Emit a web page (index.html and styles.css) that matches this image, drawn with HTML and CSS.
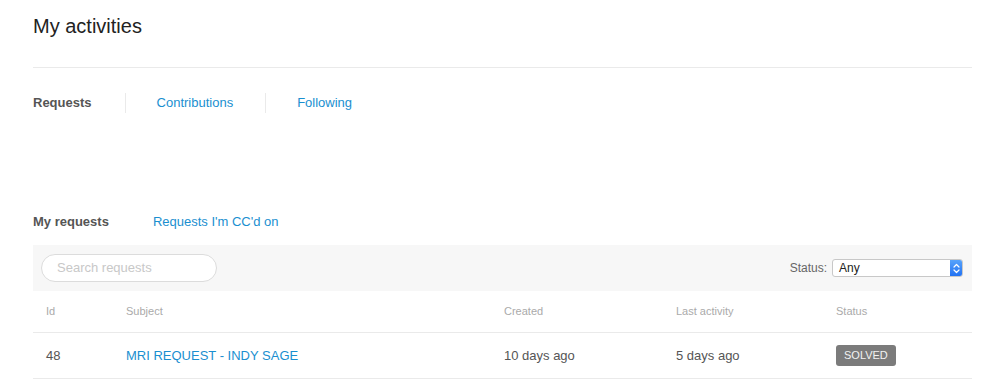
FILE: index.html
```html
<!DOCTYPE html>
<html lang="en">
<head>
<meta charset="utf-8">
<title>My activities</title>
<link rel="stylesheet" href="styles.css">
</head>
<body>
<div class="page">
  <header class="page-header">
    <h1>My activities</h1>
  </header>
  <nav class="tabs">
    <span class="tab current">Requests</span>
    <a class="tab" href="#">Contributions</a>
    <a class="tab" href="#">Following</a>
  </nav>
  <nav class="subtabs">
    <span class="subtab current">My requests</span>
    <a class="subtab" href="#">Requests I'm CC'd on</a>
  </nav>
  <div class="filters">
    <div class="search">Search requests</div>
    <div class="status-filter">
      <span class="status-label">Status:</span>
      <div class="select">
        <span class="select-value">Any</span>
        <span class="select-arrow">
          <svg width="7" height="11" viewBox="0 0 7 11"><path d="M1 4 L3.5 1.5 L6 4 M1 7 L3.5 9.5 L6 7" fill="none" stroke="#fff" stroke-width="1.2" stroke-linecap="round" stroke-linejoin="round"/></svg>
        </span>
      </div>
    </div>
  </div>
  <div class="table">
    <div class="row head">
      <div class="cell c-id">Id</div>
      <div class="cell">Subject</div>
      <div class="cell">Created</div>
      <div class="cell">Last activity</div>
      <div class="cell">Status</div>
    </div>
    <div class="row">
      <div class="cell c-id">48</div>
      <div class="cell"><a href="#">MRI REQUEST - INDY SAGE</a></div>
      <div class="cell">10 days ago</div>
      <div class="cell">5 days ago</div>
      <div class="cell"><span class="badge">SOLVED</span></div>
    </div>
  </div>
</div>
</body>
</html>
```
FILE: styles.css
```css
* { box-sizing: border-box; }
html, body { margin: 0; padding: 0; background: #fff; }
body {
  font-family: "Liberation Sans", Arial, Helvetica, sans-serif;
  color: #555;
}
a { color: #1a8fd0; text-decoration: none; }
.page { padding: 0 13px 0 33px; }

.page-header {
  padding-top: 14px;
  padding-bottom: 29px;
  border-bottom: 1px solid #eaeaea;
}
.page-header h1 {
  margin: 0;
  font-size: 20px;
  line-height: 24px;
  font-weight: normal;
  color: #222;
}

.tabs {
  display: flex;
  margin-top: 25px;
  font-size: 13px;
  line-height: 20px;
}
.tab { padding: 0 32px 0 31px; border-right: 1px solid #eaeaea; }
.tab:first-child { padding-left: 0; padding-right: 33px; }
.tab:last-child { border-right: none; }
.tab.current { font-weight: bold; color: #555; }

.subtabs {
  display: flex;
  gap: 44px;
  margin-top: 99px;
  font-size: 13px;
  line-height: 20px;
}
.subtab.current { font-weight: bold; color: #555; }

.filters {
  margin-top: 13px;
  height: 46px;
  background: #f7f7f7;
  display: flex;
  align-items: center;
  justify-content: space-between;
  padding: 0 9px 0 8px;
}
.search {
  width: 176px;
  height: 28px;
  border: 1px solid #dcdcdc;
  border-radius: 14px;
  background: #fff;
  padding-left: 15px;
  font-size: 13px;
  line-height: 26px;
  color: #c8c8c8;
}
.status-filter {
  display: flex;
  align-items: center;
  gap: 5px;
}
.status-label { font-size: 12px; color: #666; }
.select {
  width: 131px;
  height: 18px;
  border: 1px solid #c8c8c8;
  border-radius: 3px;
  background: #fff;
  display: flex;
  align-items: center;
  justify-content: space-between;
  overflow: hidden;
}
.select-value { font-size: 12px; color: #222; padding-left: 6px; }
.select-arrow {
  width: 13px;
  height: 18px;
  margin: -1px -1px -1px 0;
  border-radius: 0 3px 3px 0;
  background: linear-gradient(#5aa6fb, #1f6ff2);
  display: flex;
  align-items: center;
  justify-content: center;
}

.table { font-size: 13px; }
.row {
  display: grid;
  grid-template-columns: 93px 378px 172px 160px 1fr;
  align-items: center;
  height: 46px;
  border-bottom: 1px solid #eaeaea;
  color: #555;
}
.row.head {
  height: 42px;
  padding-bottom: 2px;
  font-size: 11px;
  color: #aaa;
}
.c-id { padding-left: 13px; }
.badge {
  display: inline-block;
  background: #7b7b7b;
  color: #f2f2f2;
  font-size: 11px;
  line-height: 21px;
  padding: 0 8px;
  border-radius: 3px;
}
```
